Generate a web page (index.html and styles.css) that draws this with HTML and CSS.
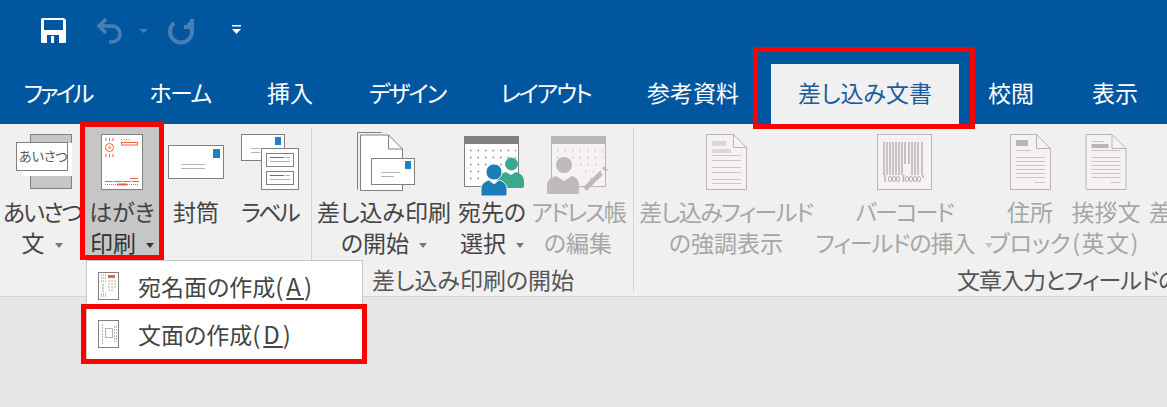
FILE: index.html
```html
<!DOCTYPE html>
<html lang="ja">
<head>
    <meta charset="UTF-8">
    <title>差し込み文書</title>
    <link rel="stylesheet" href="styles.css">
</head>
<body>
    <!-- Title bar -->
    <div class="titlebar">
        <svg class="qat" viewBox="0 0 260 64" width="260" height="64">
            <path d="M41 19.500a1.500 1.500 0 0 1 1.500-1.500H64l2 2v21.500a1.500 1.500 0 0 1-1.500 1.500h-22a1.500 1.500 0 0 1-1.500-1.500z" fill="#fff"/>
            <rect x="44" y="20" width="19" height="10" fill="#01579f"/>
            <rect x="47" y="35" width="12" height="8" fill="#01579f"/>
            <rect x="51" y="36" width="3" height="7" fill="#fff"/>
            <path d="M106 19l-7 7 7 7M99 26h13a8 8 0 0 1 0 16h-3" fill="none" stroke="#4a7fb5" stroke-width="3.500"/>
            <path d="M139 29h9l-4.500 4z" fill="#4a7fb5"/>
            <path d="M174 23a11 11 0 1 0 14 0M192 19v8h-8" fill="none" stroke="#4a7fb5" stroke-width="4"/>
            <path d="M232 25h9v1.500h-9zM232 29h9l-4.500 5z" fill="#fff"/>
        </svg>
    </div>

    <!-- Tabs -->
    <nav class="tabs">
        <a class="tab tab-file track-3">ファイル</a>
        <a class="tab tab-home track-15">ホーム</a>
        <a class="tab tab-insert">挿入</a>
        <a class="tab tab-design track-2">デザイン</a>
        <a class="tab tab-layout track-2">レイアウト</a>
        <a class="tab tab-refs">参考資料</a>
        <a class="tab tab-mail active">差し込み文書</a>
        <a class="tab tab-review">校閲</a>
        <a class="tab tab-view">表示</a>
    </nav>

    <!-- Ribbon -->
    <div class="ribbon">
        <div class="group group-create">
            <div class="buttons">
                <div class="btn btn-greet">
                    <svg class="icon" viewBox="0 124 84 73">
                        <rect x="30.500" y="134.500" width="41" height="54" fill="#c6c6c6" stroke="#808080"/>
                        <rect x="22" y="143" width="50" height="33" fill="#fff"/>
                        <rect x="16.500" y="142.500" width="51" height="28" fill="#fff" stroke="#808080"/>
                        <text x="19" y="161" class="icon-text">あいさつ</text>
                    </svg>
                    <span class="line track-2">あいさつ</span>
                    <span class="line">文<i class="caret"></i></span>
                </div>
                <div class="btn btn-card selected">
                    <svg class="icon" viewBox="84 124 76 73">
                        <rect x="101.500" y="134.500" width="41" height="55" fill="#fff" stroke="#808080"/>
                        <g fill="none" stroke="#f0623e">
                            <path d="M106 138v3M109.500 138v3M113 138v3M106 154v3M109.500 154v3M113 154v3"/>
                            <circle cx="109.500" cy="147.500" r="4"/>
                            <circle cx="109.500" cy="147.500" r="1"/>
                            <path d="M121 139.500h9" stroke-dasharray="1 1.500"/>
                            <rect x="121.500" y="142.500" width="16" height="2.500"/>
                            <path d="M130 178.500h9M105 181.500h34" stroke-dasharray="8 1"/>
                            <path d="M105 184.500h34" stroke-dasharray="1 1"/>
                            <path d="M117 184.500h10" stroke-width="2"/>
                        </g>
                    </svg>
                    <span class="line">はがき</span>
                    <span class="line dark">印刷<i class="caret caret-dark"></i></span>
                </div>
                <div class="btn btn-env">
                    <svg class="icon" viewBox="160 124 72 73">
                        <rect x="168.500" y="145.500" width="55" height="33" fill="#fff" stroke="#808080"/>
                        <rect x="213" y="149" width="7" height="9" fill="#1a85c4"/>
                        <path d="M181 164.500h24M181 168.500h24" stroke="#b3b3b3"/>
                    </svg>
                    <span class="line">封筒</span>
                </div>
                <div class="btn btn-label">
                    <svg class="icon" viewBox="232 124 79 73">
                        <rect x="241.500" y="134.500" width="43" height="26" fill="#fff" stroke="#808080"/>
                        <rect x="275" y="137" width="6" height="8" fill="#1a85c4"/>
                        <path d="M251 148.500h9M251 152.500h9" stroke="#b3b3b3"/>
                        <rect x="261.500" y="148.500" width="37" height="41" fill="#fff" stroke="#808080"/>
                        <rect x="266.500" y="153.500" width="27" height="13" fill="#fff" stroke="#808080"/>
                        <rect x="266.500" y="171.500" width="27" height="13" fill="#fff" stroke="#808080"/>
                        <path d="M270 157.500h14M270 175.500h14" stroke="#1a85c4"/>
                        <path d="M285 157.500h5M270 161.500h20M285 175.500h5M270 179.500h20" stroke="#b3b3b3"/>
                    </svg>
                    <span class="line line-label">ラベル</span>
                </div>
            </div>
        </div>
        <div class="sep"></div>

        <div class="group group-start">
            <div class="buttons">
                <div class="btn btn-start">
                    <svg class="icon" viewBox="312 124 144 73">
                        <path d="M357.500 189.500v-57h24" fill="none" stroke="#808080"/>
                        <path d="M360.500 190.500v-55.500h28l14 14v41.500z" fill="#fff" stroke="#808080"/>
                        <path d="M388.500 135v14h14" fill="none" stroke="#808080"/>
                        <rect x="371.500" y="158.500" width="43" height="26" fill="#fff" stroke="#808080"/>
                        <rect x="405" y="161" width="6" height="8" fill="#1a85c4"/>
                        <path d="M381 172.500h19M381 176.500h13" stroke="#b3b3b3"/>
                    </svg>
                    <span class="line">差し込み印刷</span>
                    <span class="line">の開始<i class="caret"></i></span>
                </div>
                <div class="btn btn-recip">
                    <svg class="icon" viewBox="456 124 72 73">
                        <rect x="464.500" y="136.500" width="54" height="50" fill="#fff" stroke="#808080"/>
                        <rect x="464" y="136" width="55" height="8" fill="#808080"/>
                        <path d="M470 150.500h46M470 157.500h46M470 164.500h46M470 171.500h12M470 178.500h12" stroke="#808080" stroke-width="1.500" stroke-dasharray="1.500 6"/>
                        <circle cx="511.500" cy="164" r="6.500" fill="#3ba88f"/>
                        <path d="M497 190v-8c0-6 5-9 9-10l5 3 5-3c4 1 8 4 8 9v5a2 2 0 0 1-2 2h-25z" fill="#3ba88f"/>
                        <circle cx="494" cy="172" r="8" fill="#1a7db5" stroke="#f0f0f0"/>
                        <path d="M481 195v-6c0-5 4-8 8-9l5 4 5-4c4 1 8 4 8 9v5a2 2 0 0 1-2 2h-23a1 1 0 0 1-1-1z" fill="#1a7db5" stroke="#f0f0f0"/>
                    </svg>
                    <span class="line">宛先の</span>
                    <span class="line">選択<i class="caret"></i></span>
                </div>
                <div class="btn btn-book off">
                    <svg class="icon" viewBox="528 124 100 73">
                        <rect x="551.500" y="136.500" width="54" height="50" fill="#f6f1f4" stroke="#b9b4b7"/>
                        <rect x="551" y="136" width="55" height="8" fill="#b9b4b7"/>
                        <path d="M557 150.500h46M557 157.500h46M580 164.500h23M585 171.500h18M590 178.500h13" stroke="#c9c4c7" stroke-width="1.500" stroke-dasharray="1.500 6"/>
                        <circle cx="564" cy="165" r="8" fill="#bfbabd"/>
                        <path d="M547 193v-8c0-5 5-8 9-9l8 5 8-5c4 1 7 4 7 9v8a1 1 0 0 1-1 1h-30a1 1 0 0 1-1-1z" fill="#bfbabd"/>
                        <path d="M585 189l16-16" stroke="#bfbabd" stroke-width="5"/>
                        <path d="M604 170l2-2" stroke="#bfbabd" stroke-width="5"/>
                    </svg>
                    <span class="line track-2">アドレス帳</span>
                    <span class="line">の編集</span>
                </div>
            </div>
            <div class="group-label label-start">差し込み印刷の開始</div>
        </div>
        <div class="sep sep-wide"></div>

        <div class="group group-fields">
            <div class="buttons">
                <div class="btn btn-highlight off">
                    <svg class="icon" viewBox="632 124 184 73">
                        <path d="M704.500 189.500v-55h27l13 13v42z" fill="#f6f1f4" stroke="#b9b4b7"/>
                        <path d="M731.500 134.500v13h13" fill="none" stroke="#b9b4b7"/>
                        <rect x="710" y="141" width="14" height="5" fill="#dcd6da"/>
                        <rect x="710" y="149" width="19" height="4" fill="#dcd6da"/>
                        <path d="M710 155.500h29M710 160.500h29M710 167.500h29M710 172.500h29M710 179.500h29M710 183.500h29" stroke="#c9c4c7"/>
                    </svg>
                    <span class="line track-15">差し込みフィールド</span>
                    <span class="line">の強調表示</span>
                </div>
                <div class="btn btn-barcode off">
                    <svg class="icon" viewBox="812 124 172 73">
                        <rect x="871.500" y="134.500" width="54" height="55" fill="#f6f1f4" stroke="#b9b4b7"/>
                        <path d="M878 142v33M881 142v33M884 142v33M887 142v33M890 142v33M893 142v33M896 142v33M899 142v22M903 142v22M906 142v33M909 142v33M912 142v33M916 142v33" stroke="#b9b4b7" stroke-width="1.500"/>
                        <path d="M879 175v7M897.500 175v7M917 175v3" stroke="#b9b4b7" stroke-width="1.500"/>
                        <g fill="none" stroke="#b9b4b7">
                            <rect x="882.500" y="176.500" width="3" height="5" rx="1.500"/>
                            <rect x="886.500" y="176.500" width="3" height="5" rx="1.500"/>
                            <rect x="890.500" y="176.500" width="3" height="5" rx="1.500"/>
                            <rect x="899.500" y="176.500" width="3" height="5" rx="1.500"/>
                            <rect x="903.500" y="176.500" width="3" height="5" rx="1.500"/>
                            <rect x="907.500" y="176.500" width="3" height="5" rx="1.500"/>
                            <rect x="911.500" y="176.500" width="3" height="5" rx="1.500"/>
                        </g>
                    </svg>
                    <span class="line track-2">バーコード</span>
                    <span class="line track-1">フィールドの挿入<i class="caret caret-off"></i></span>
                </div>
                <div class="btn btn-address off">
                    <svg class="icon" viewBox="980 124 80 73">
                        <path d="M1000.500 189.500v-55h26l14 14v41z" fill="#f6f1f4" stroke="#b9b4b7"/>
                        <path d="M1026.500 134.500v14h14" fill="none" stroke="#b9b4b7"/>
                        <rect x="1006" y="140" width="12" height="6" fill="#b9b4b7"/>
                        <path d="M1006 150.500h15M1006 157.500h29M1006 161.500h29M1006 165.500h29M1006 169.500h29M1006 173.500h29M1006 177.500h29M1025 182.500h10" stroke="#c9c4c7"/>
                    </svg>
                    <span class="line">住所</span>
                    <span class="line">ブロック</span>
                </div>
                <div class="btn btn-salute off">
                    <svg class="icon" viewBox="1057.500 124 72 73">
                        <path d="M1073.500 189.500v-55h26l14 14v41z" fill="#f6f1f4" stroke="#b9b4b7"/>
                        <path d="M1099.500 134.500v14h14" fill="none" stroke="#b9b4b7"/>
                        <path d="M1079 141.500h12M1079 150.500h29M1079 157.500h29M1079 161.500h29M1079 165.500h29M1079 169.500h29M1079 173.500h29M1079 177.500h29M1098 182.500h10" stroke="#c9c4c7"/>
                        <rect x="1079" y="144" width="17" height="4" fill="#b9b4b7"/>
                    </svg>
                    <span class="line">挨拶文</span>
                    <span class="line line-en">(英文)</span>
                </div>
                <div class="btn btn-cut off">
                    <div class="icon"></div>
                    <span class="line">差し込み</span>
                </div>
            </div>
            <div class="group-label label-fields track-1">文章入力とフィールドの挿入</div>
        </div>
    </div>

    <!-- Dropdown menu -->
    <div class="menu">
        <div class="menu-item">
            <svg class="menu-icon" viewBox="0 0 21 28">
                <rect x=".5" y=".5" width="20" height="27" fill="#fff" stroke="#808080"/>
                <path d="M3 3h5M3 6h5M3 9h5" stroke="#3ba88f" stroke-dasharray="1 1"/>
                <path d="M5 12v9" stroke="#999" stroke-dasharray="2 1"/>
                <path d="M10 3h7v3h-7z" fill="#f0623e"/>
                <path d="M11 8v11M14 8v11M17 8v8" stroke="#b3b3b3" stroke-dasharray="2 1"/>
                <path d="M3 22h6M3 24h6" stroke="#f0623e" stroke-dasharray="1 1"/>
            </svg>
            <span>宛名面の作成<span class="key">(<u>A</u>)</span></span>
        </div>
        <div class="menu-item">
            <svg class="menu-icon" viewBox="0 0 21 28">
                <rect x=".5" y=".5" width="20" height="27" fill="#fff" stroke="#808080"/>
                <rect x="7.500" y="8.500" width="7" height="9" fill="none" stroke="#b3b3b3"/>
                <path d="M4.500 4v20M16.500 6v16M18.500 6v16" stroke="#b3b3b3" stroke-dasharray="2 1"/>
            </svg>
            <span>文面の作成<span class="key">(<u>D</u>)</span></span>
        </div>
    </div>

    <!-- Red highlight boxes -->
    <div class="mark mark-tab"></div>
    <div class="mark mark-card"></div>
    <div class="mark mark-item"></div>
</body>
</html>
```

FILE: styles.css
```css
/* General Styling */
* {
    margin: 0;
    padding: 0;
    box-sizing: border-box;
    font-family: "Noto Sans CJK JP", "Noto Sans", sans-serif;
    font-feature-settings: "palt";
}

body {
    width: 1167px;
    height: 407px;
    overflow: hidden;
    background-color: #e6e6e6;
    position: relative;
}

/* Tighter katakana, closer to the UI font of the original */
.track-1 { letter-spacing: -1px; }
.track-15 { letter-spacing: -1.5px; }
.track-2 { letter-spacing: -2px; }
.track-3 { letter-spacing: -3px; }

/* Title bar */
.titlebar {
    height: 64px;
    background-color: #01579f;
}

.qat {
    display: block;
}

/* Tabs */
.tabs {
    height: 60px;
    background-color: #01579f;
    display: flex;
}

.tab {
    flex: none;
    color: #fff;
    font-size: 23px;
    line-height: 56px;
    text-align: center;
    white-space: nowrap;
}

.tab-file { width: 115px; }
.tab-home { width: 130px; }
.tab-insert { width: 90px; }
.tab-design { width: 144px; }
.tab-layout { width: 133px; }
.tab-refs { width: 159px; padding-left: 3px; }
.tab-mail { width: 188px; }
.tab-review { width: 104px; }
.tab-view { width: 104px; }

.tab.active {
    background-color: #f0f0f0;
    color: #1a5c9e;
}

/* Ribbon */
.ribbon {
    height: 173px;
    background-color: #f0f0f0;
    border-bottom: 1px solid #d4d4d4;
    display: flex;
    overflow: hidden;
}

.group {
    flex: none;
    display: flex;
    flex-direction: column;
}

.group-create { width: 311px; }
.group-start { width: 321px; }
.group-fields { width: 533px; }

.sep {
    flex: none;
    width: 1px;
    margin: 4px 0;
    background-color: #d4d4d4;
}

.buttons {
    display: flex;
    height: 142px;
}

.btn {
    flex: none;
    height: 136px;
    display: flex;
    flex-direction: column;
    align-items: center;
    color: #444;
    font-size: 23px;
    line-height: 31px;
    white-space: nowrap;
}

.btn.off {
    color: #a6a6a6;
}

.btn.selected {
    background-color: #c6c6c6;
}

.dark {
    color: #333;
}

.icon {
    flex: none;
    display: block;
    width: 100%;
    height: 73px;
    margin-bottom: -1px;
}

.icon-text {
    font-size: 13px;
    fill: #555;
}

.line-label {
    letter-spacing: -2.5px;
    padding-right: 4px;
}

.line-en {
    letter-spacing: 1.5px;
}

.btn-greet { width: 84px; }
.btn-card { width: 76px; }
.btn-env { width: 72px; }
.btn-label { width: 79px; }
.btn-start { width: 144px; }
.btn-recip { width: 72px; }
.btn-book { width: 100px; }
.btn-highlight { width: 184px; }
.btn-barcode { width: 172px; }
.btn-address { width: 80px; }
.btn-salute { width: 72px; }
.btn-cut { width: 25px; padding-left: 7px; align-items: flex-start; }

.caret {
    display: inline-block;
    width: 0;
    height: 0;
    margin-left: 10px;
    vertical-align: middle;
    border-left: 4.5px solid transparent;
    border-right: 4.5px solid transparent;
    border-top: 5px solid #777;
}

.caret-dark {
    border-top-color: #333;
}

.caret-off {
    border-top-color: #c4c4c4;
}

.group-label {
    height: 30px;
    color: #555;
    font-size: 23px;
    line-height: 26px;
    white-space: nowrap;
}

.label-start { padding-left: 60px; }
.label-fields { padding-left: 323px; }

/* Dropdown menu */
.menu {
    position: absolute;
    left: 86px;
    top: 260px;
    width: 277px;
    height: 100px;
    background-color: #fff;
    border: 1px solid #c6c6c6;
    padding-top: 1px;
}

.menu-item {
    height: 48px;
    display: flex;
    align-items: center;
    gap: 19px;
    padding-left: 11px;
    color: #444;
    font-size: 23px;
    line-height: 44px;
    white-space: nowrap;
    font-feature-settings: normal;
}

.key {
    letter-spacing: 3px;
    font-size: 24px;
}

.menu-icon {
    flex: none;
    width: 21px;
    height: 28px;
}

/* Red highlight boxes */
.mark {
    position: absolute;
    border: 5px solid #ff0000;
}

.mark-tab {
    left: 753px;
    top: 47px;
    width: 222px;
    height: 82px;
}

.mark-card {
    left: 80px;
    top: 122px;
    width: 84px;
    height: 138px;
}

.mark-item {
    left: 81px;
    top: 304px;
    width: 286px;
    height: 60px;
}
```
